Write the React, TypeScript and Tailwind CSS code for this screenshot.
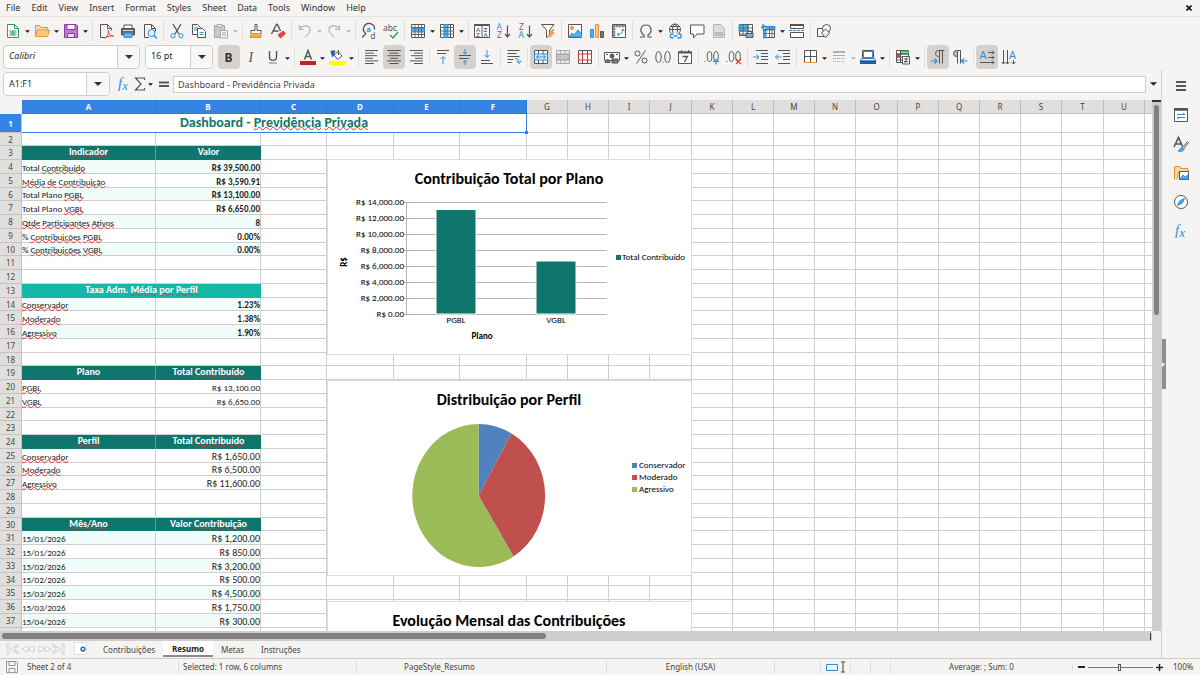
import type { ReactNode } from "react";

const GRAY = "#555555";
const BLUE = "#2f8fd6";
const ORANGE = "#e8913c";
const PURPLE = "#a33bb5";
const GREEN = "#2f9e54";

const lines = (widths: number[], align: "l" | "c" | "r") =>
    widths.map((w, i) => {
        const x = align === "l" ? 1 : align === "c" ? 8 - w / 2 : 15 - w;
        return `M${x} ${1.5 + i * 2.6}h${w}`;
    }).join("");

const letter = (x: number, y: number, text: string, fill: string, size = 7, bold = false) => (
    <text
        x={x}
        y={y}
        fill={fill}
        stroke="none"
        fontSize={size}
        fontWeight={bold ? 700 : 400}
        fontFamily="Noto Sans, sans-serif"
    >
        {text}
    </text>
);

const icons: Record<string, ReactNode> = {
    new: (
        <g stroke={GREEN}>
            <path d="M2.5 1.5h7l4 4v9h-11z" fill="#fff" />
            <path d="M9.5 1.5v4h4" />
            <path d="M4.5 8h7M4.5 10h7M4.5 12h7M8 8v4" strokeWidth="1.2" />
        </g>
    ),
    open: (
        <g stroke={ORANGE}>
            <path d="M1.5 13.5v-11h4l1.5 2h6.5v2.5" fill="#fbd9a5" />
            <path d="M1.5 13.5l2-6.5h12l-2 6.5z" fill="#fdc97c" />
        </g>
    ),
    save: (
        <g stroke="#8d3aa0">
            <path d="M1.5 1.5h11.5l1.5 1.5v11.5h-13z" fill="#c678d8" />
            <path d="M4 1.5h8v5h-8z" fill="#fff" />
            <path d="M4.5 14.5v-4h7v4z" fill="#efd8f4" />
        </g>
    ),
    pdf: (
        <g>
            <path d="M8 14.5H2.5v-13h7l4 4v2M9.5 1.5v4h4" />
            <path d="M7 15c3-2 4-5 3.5-7.5-.5 3 2 5.5 5 5.5-3-.5-6 .5-8.5 2z" stroke="#e0433f" />
        </g>
    ),
    print: (
        <g>
            <path d="M4 5V2h8v3" fill="#fff" />
            <path d="M1.5 5.5h13v6.5h-13z" fill="#666" />
            <path d="M3 7.5h10" stroke="#ddd" />
            <path d="M4 10h8v4.5H4z" fill="#6db4ec" stroke={BLUE} />
        </g>
    ),
    preview: (
        <g>
            <path d="M7 14.5H2.5v-13h7l4 4v3M9.5 1.5v4h4" />
            <circle cx="9.5" cy="10" r="3.5" stroke={BLUE} fill="#dceefb" />
            <path d="M12 12.5l3 3" stroke={BLUE} strokeWidth="1.5" />
        </g>
    ),
    cut: (
        <g>
            <path d="M4 1l6 10M12 1L6 11" strokeWidth="1.3" />
            <circle cx="4" cy="12.8" r="2.1" stroke={BLUE} />
            <circle cx="12" cy="12.8" r="2.1" stroke={BLUE} />
        </g>
    ),
    copy: (
        <g>
            <path d="M1.5 1.5h5l3 3v7h-8z" fill="#fff" />
            <path d="M3 5h4M3 7h4" stroke={BLUE} />
            <path d="M6.5 5.5h5l3 3v6h-8z" fill="#fff" />
            <path d="M8.5 9.5h4M8.5 11.5h4" stroke={BLUE} />
        </g>
    ),
    paste: (
        <g stroke="#a8a8a8">
            <path d="M1.5 2.5h10v12h-10z" fill="#c9c9c9" />
            <path d="M4 1.5h5v2.5H4z" fill="#eee" />
            <path d="M7.5 7.5h7v7.5h-7z" fill="#f6f6f6" />
            <path d="M9 10h4M9 12h4" />
        </g>
    ),
    brush: (
        <g>
            <path d="M7 1.5h2v6h4v3H3v-3h4z" fill="#fff" />
            <path d="M3 10.5h10v4H2z" fill="#f5a95c" stroke={ORANGE} />
        </g>
    ),
    clear: (
        <g>
            <path d="M1.5 11L6.5 1.5h1L10.5 8M3.5 8h5" strokeWidth="1.4" />
            <path d="M8 12l5-4 2.5 2.5-5 4.5z" fill="#e8484b" stroke="#e0433f" />
        </g>
    ),
    undo: <path d="M2.5 2v4.5h4.5M2.5 6.5C5 2 12 1.5 13 6c.7 3.5-2 5-5 8" stroke="#b5b5b5" strokeWidth="1.2" />,
    redo: <path d="M13.5 2v4.5H9M13.5 6.5C11 2 4 1.5 3 6c-.7 3.5 2 5 5 8" stroke="#b5b5b5" strokeWidth="1.2" />,
    find: (
        <g>
            <path d="M5 10.5A5.5 5.5 0 1 1 13.5 6.5M5 10.5l-4 4" strokeWidth="1.3" />
            {letter(5.5, 8.5, "a", BLUE, 7, true)}
            {letter(9.5, 15.5, "d", GRAY, 8)}
        </g>
    ),
    spell: (
        <g>
            {letter(0, 7.5, "abc", GRAY, 8.5)}
            <path d="M7 12l3 3 5-6" stroke={GREEN} strokeWidth="1.3" />
        </g>
    ),
    row: (
        <g>
            <path d="M1.5 1.5h13v13h-13z" fill="#fff" />
            <path d="M1.5 4.5h13M1.5 11.5h13" />
            <path d="M1.5 5h13v4h-13z" fill="#57aef0" stroke={BLUE} />
            <path d="M5 1.5v13M8.5 1.5v13M11.5 1.5v13" strokeWidth=".8" />
        </g>
    ),
    col: (
        <g>
            <path d="M1.5 1.5h13v13h-13z" fill="#fff" />
            <path d="M11.5 1.5v13" />
            <path d="M5 1.5v13h4v-13z" fill="#57aef0" stroke={BLUE} />
            <path d="M1.5 4.5h13M1.5 8h13M1.5 11h13" strokeWidth=".8" />
        </g>
    ),
    sort: (
        <g>
            <path d="M.5 1.5h15v13H.5zM8 1.5v13" fill="#fff" />
            <path d="M.5 2h15" strokeWidth="2" />
            {letter(2, 8.5, "A", BLUE, 6, true)}
            {letter(2.2, 14, "Z", PURPLE, 6, true)}
            {letter(9.7, 8.5, "Z", PURPLE, 6, true)}
            {letter(9.5, 14, "A", BLUE, 6, true)}
        </g>
    ),
    asc: (
        <g>
            {letter(0.5, 7, "A", BLUE, 8.5)}
            {letter(1, 15, "Z", PURPLE, 8.5)}
            <path d="M11.5 2.5v11M9 11l2.5 3 2.5-3" strokeWidth="1.2" />
        </g>
    ),
    desc: (
        <g>
            {letter(1, 7, "Z", PURPLE, 8.5)}
            {letter(0.5, 15, "A", BLUE, 8.5)}
            <path d="M11.5 2.5v11M9 11l2.5 3 2.5-3" strokeWidth="1.2" />
        </g>
    ),
    filter: (
        <g>
            <path d="M1.5 1.5h12.5L9.5 7v5l-3 2.5V7z" fill="#fff" />
            <path d="M12 6.5L8.5 11H11l-1.5 4L14.5 9.5H12L14 6.5z" fill="#f9a33c" stroke={ORANGE} strokeWidth=".6" />
        </g>
    ),
    image: (
        <g>
            <path d="M1.5 1.5h13v13h-13z" fill="#fff" />
            <circle cx="5" cy="5" r="1.5" fill="#f9a33c" stroke={ORANGE} />
            <path d="M2 14l3-4 2 2 4-5 3.5 4v3z" fill="#57aef0" stroke={BLUE} />
        </g>
    ),
    chart: (
        <g>
            <path d="M1.5 6.5h3v8h-3z" fill="#57aef0" stroke={BLUE} />
            <path d="M6.5 1.5h3v13h-3z" fill="#fdc97c" stroke={ORANGE} />
            <path d="M11.5 8.5h3v6h-3z" fill="#777" />
        </g>
    ),
    pivot: (
        <g>
            <path d="M1.5 1.5h13v13h-13z" fill="#fff" />
            <path d="M2 3h12M3 2v12M6 2v2.5M9 2v2.5M12 2v2.5M2 6h2.5M2 9h2.5M2 12h2.5" strokeWidth="1.4" stroke="#888" />
            <path d="M6 11.5c4 0 6-2 6-5M10.5 8L12 6l1.5 2M8 10l-2 1.5 2 1.5" stroke={BLUE} />
        </g>
    ),
    omega: <path d="M2 14h4v-2C1 9 2.5 2 8 2s7 7 2 10v2h4" strokeWidth="1.2" />,
    link: (
        <g>
            <circle cx="8" cy="6.5" r="5.5" />
            <path d="M8 1c-3.5 3-3.5 8 0 11M8 1c3.5 3 3.5 8 0 11M2.5 6.5h11M3.5 3.5h9" />
            <path d="M3 10h11v6H3z" fill="#f5f4f2" stroke="none" />
            <path d="M6.5 11H5.3a2 2 0 0 0 0 4h1.2M10.5 11h1.7a2 2 0 0 1 0 4h-1.7M6.5 13h4" stroke={BLUE} strokeWidth="1.3" />
        </g>
    ),
    comment: <path d="M1.5 2h13.5v9H8l-3.5 4v-4h-3z" fill="#fff" />,
    header: (
        <g stroke="#b5b5b5">
            <path d="M2.5 1.5h7l4 4v9h-11z" fill="#dedede" />
            <path d="M4 9.5h8v3H4z" fill="#c0c0c0" />
        </g>
    ),
    printRange: (
        <g>
            <path d="M1.5 1.5h13v11h-13z" fill="#fff" />
            <path d="M1 2h9v6H1z" fill="#57aef0" stroke={BLUE} />
            <path d="M1.5 5h13M1.5 8h13M1.5 11h13M5 1.5v11M10 1.5v11" strokeWidth=".8" />
            <path d="M8 10h7v4.5H8z" fill="#6db4ec" />
            <path d="M9.5 8.5h4v2h-4z" fill="#fff" />
        </g>
    ),
    freeze: (
        <g>
            <path d="M3.5 3.5h11v11h-11z" fill="#fff" />
            <path d="M3 3.5h12v3H3zM3.5 3v12H6V3z" fill="#57aef0" stroke={BLUE} />
            <path d="M3.5 7h11M3.5 10.5h11M9.5 3.5v11M12 3.5v11" strokeWidth=".8" />
            <path d="M1 4h4M3 1v5" stroke={BLUE} strokeWidth="1.3" />
        </g>
    ),
    split: (
        <g>
            <path d="M1.5 1.5v4h13v-4zM1.5 14.5v-5h13v5z" fill="#fff" />
            <path d="M1 2h14" strokeWidth="2" />
            <path d="M0 7.5h16" stroke={BLUE} strokeDasharray="3 1" />
        </g>
    ),
    shapes: (
        <g>
            <path d="M1.5 5.5h8v8h-8z" fill="#f5f4f2" />
            <circle cx="10.5" cy="5.5" r="4" fill="#f5f4f2" />
            <path d="M9.5 6l4 4-4 4.5-4-4.5z" fill="#f5f4f2" />
        </g>
    ),
    left: <path d={lines([13, 9, 12, 8, 13, 9], "l")} />,
    center: <path d={lines([14, 9, 13, 8, 14, 9], "c")} />,
    right: <path d={lines([13, 9, 12, 8, 13, 9], "r")} />,
    top: (
        <g>
            <path d="M2 1.5h12M2 4.5h9" />
            <path d="M8 15V8M5.5 10L8 7.5l2.5 2.5" stroke={BLUE} />
        </g>
    ),
    middle: (
        <g>
            <path d="M2 6.5h12M2 9.5h10" />
            <path d="M8 0v5M6 3l2 2 2-2M8 16v-4.5M6 13.5l2-2 2 2" stroke={BLUE} />
        </g>
    ),
    bottom: (
        <g>
            <path d="M2 11.5h9M2 14.5h12" />
            <path d="M8 1v7M5.5 6L8 8.5 10.5 6" stroke={BLUE} />
        </g>
    ),
    wrap: (
        <g>
            <path d="M1.5 1.5h12M1.5 4.5h9M1.5 7.5h12M1.5 10.5h6M1.5 13.5h4" />
            <path d="M9 9.5c3 0 4 1 4 4M10.5 11.5l2.5 3 2.5-3" stroke={BLUE} />
        </g>
    ),
    merge: (
        <g>
            <path d="M1.5 1.5h13v13h-13zM5.5 1.5v3.5M10 1.5v3.5M5.5 11v3.5M10 11v3.5" fill="#fff" />
            <path d="M1.5 5h13v6h-13z" fill="#d9effc" stroke={BLUE} />
            <path d="M3.5 8h9M5.5 6L3.5 8l2 2M10.5 6l2 2-2 2" stroke={BLUE} />
        </g>
    ),
    mergeCells: (
        <g stroke="#aaa">
            <path d="M1.5 1.5h13v13h-13z" fill="#ececec" />
            <path d="M1.5 5h13M1.5 11h13M5.5 1.5V5M10 1.5V5M5.5 11v3.5M10 11v3.5" />
            <path d="M2 5.5h12v5H2z" fill="#c4c4c4" />
        </g>
    ),
    splitCells: (
        <g>
            <path d="M1.5 1.5h13v13h-13z" fill="#fff" />
            <path d="M5.5 1.5v13M10.5 1.5v13" />
            <path d="M1.5 5h13v6h-13zM5.5 5v6M10.5 5v6" stroke="#d9363a" />
        </g>
    ),
    currency: (
        <g>
            <path d="M.5 3.5h15v8H.5z" fill="#fff" />
            <circle cx="8" cy="7" r="2" fill={GRAY} />
            <path d="M1 13.5c1-4 4-4 5 0zM8 10h6v4H8z" fill="#777" />
            <path d="M2 5.5h2M12 5.5h2" />
        </g>
    ),
    percent: (
        <g>
            <circle cx="4.5" cy="4.5" r="2.5" />
            <circle cx="11.5" cy="11.5" r="2.5" />
            <path d="M12.5 1.5l-9 13" />
        </g>
    ),
    number: (
        <g>
            <ellipse cx="3.5" cy="8" rx="2.7" ry="5.5" />
            <ellipse cx="12.5" cy="8" rx="2.7" ry="5.5" />
            <path d="M7.5 13.5h1" />
        </g>
    ),
    date: (
        <g>
            <path d="M1.5 3h13v11.5h-13z" fill="#fff" />
            <path d="M1 3.5h14" strokeWidth="2" />
            <path d="M4.5 1v2M11.5 1v2" />
            <path d="M5.5 7.5h5L7.5 13" strokeWidth="1.3" />
        </g>
    ),
    addDecimal: (
        <g>
            <ellipse cx="5.5" cy="7.5" rx="2.3" ry="5" />
            <ellipse cx="12" cy="7.5" rx="2.3" ry="5" />
            <path d="M.5 12.5h1" />
            <path d="M9 12.5h6M12 9.5v6" stroke={BLUE} strokeWidth="1.2" />
        </g>
    ),
    delDecimal: (
        <g>
            <ellipse cx="5.5" cy="7.5" rx="2.3" ry="5" />
            <ellipse cx="12" cy="7.5" rx="2.3" ry="5" />
            <path d="M.5 12.5h1" />
            <path d="M10 10l5 5M15 10l-5 5" stroke="#e0433f" strokeWidth="1.2" />
        </g>
    ),
    indent: (
        <g>
            <path d="M3 1.5h12M8 4.5h7M8 7.5h7M8 10.5h7M3 14.5h12" />
            <path d="M0 8h6M3.5 5.5L6 8l-2.5 2.5" stroke={BLUE} />
        </g>
    ),
    outdent: (
        <g>
            <path d="M3 1.5h12M8 4.5h7M8 7.5h7M8 10.5h7M3 14.5h12" />
            <path d="M.5 8h6M3 5.5L.5 8 3 10.5" stroke={BLUE} />
        </g>
    ),
    borders: (
        <g>
            <path d="M2.5 13.5v-12h12v12M8.5 1.5v12M2.5 7.5h12" fill="#fff" />
            <path d="M2 13.5h13" stroke={ORANGE} />
        </g>
    ),
    borderStyle: (
        <g stroke="#b0b0b0">
            <path d="M2 3h12" strokeWidth="2" />
            <path d="M2 6.5h12" />
            <path d="M2 9.5h12" strokeDasharray="3 1" />
            <path d="M2 12.5h12" strokeDasharray="1 1" />
        </g>
    ),
    borderColor: (
        <g>
            <path d="M2.5 1.5h11v8h-11z" fill="#fff" />
            <path d="M3.5 2.5h9v6h-9zM0 12l2-3h12l2 3z" stroke={BLUE} />
            <path d="M0 11.5h16V15H0z" fill="#1b5ea8" stroke="none" />
        </g>
    ),
    conditional: (
        <g>
            <path d="M1.5 1.5h12v12h-12z" fill="#fff" />
            <path d="M5.5 2h8v3h-8z" fill="#7ed69c" stroke={GREEN} />
            <path d="M2 5h3.5v3H2z" fill="#e8484b" stroke="#e0433f" />
            <path d="M1.5 5h12M1.5 8h12M1.5 11h12M5.5 1.5v12" />
            <path d="M7.5 7.5h7v7.5h-7z" fill="#fff" />
            <path d="M9 10h4M9 12.5h4M12 8.5l-2 5.5" />
        </g>
    ),
    ltr: (
        <g>
            <path d="M14.5 1.5H8.5a3 3 0 0 0 0 6h1M9.5 1.5v13M12.5 1.5v13" />
            <path d="M1 12h6M4.5 9.5L7 12l-2.5 2.5" stroke={BLUE} strokeWidth="1.2" />
        </g>
    ),
    rtl: (
        <g>
            <path d="M9 1.5H4.5a3 3 0 0 0 0 6h1v-6M5.5 1.5v13M8.5 1.5v13" fill="#bbb" />
            <path d="M9.5 12h6M12 9.5L9.5 12l2.5 2.5" stroke={BLUE} strokeWidth="1.2" />
        </g>
    ),
    textLtr: (
        <g>
            {letter(0.5, 10, "A", BLUE, 11)}
            <path d="M9 3.5h6M13 1.5l2 2-2 2M9 8.5h6M13 6.5l2 2-2 2M1 13.5h14M13 11.5l2 2-2 2" />
        </g>
    ),
    textTtb: (
        <g>
            {letter(8, 10, "A", BLUE, 11)}
            <path d="M2.5 1v14M.5 13l2 2 2-2M6.5 1v14M4.5 13l2 2 2-2M12.5 11v4M10.5 13l2 2 2-2" />
        </g>
    ),
    bold: letter(3.5, 12.5, "B", "#333", 12, true),
    italic: (
        <text x="5.5" y="12.5" fill={GRAY} stroke="none" fontSize="14" fontStyle="italic" fontFamily="Liberation Serif, serif">
            I
        </text>
    ),
    underline: (
        <g>
            <path d="M4.5 2v6c0 4.5 7 4.5 7 0V2" strokeWidth="1.4" />
            <path d="M4 14h8" stroke={BLUE} />
        </g>
    ),
    fontColor: (
        <g>
            <path d="M4.5 10.5L8 1.5l3.5 9M5.8 7.5h4.4" strokeWidth="1.5" />
            <path d="M0 12h16v4H0z" fill="#c9211e" stroke="none" />
        </g>
    ),
    fillColor: (
        <g>
            <path d="M5 6l4-3.5 4 4.5-4.5 3.5zM9.5 6V1" fill="#fff" />
            <path d="M2 2h4L3.5 8z" fill="#1b5ea8" stroke="#1b5ea8" />
            <path d="M0 12h16v4H0z" fill="#ffff00" stroke="none" />
        </g>
    ),
    sigma: <path d="M12.5 4V2h-9L9 8l-5.5 6h9v-2" strokeWidth="1.2" />,
    equals: <path d="M3 6.5h10M3 10h10" strokeWidth="1.8" />,
    fx: (
        <text x="2" y="12" fill={BLUE} stroke="none" fontSize="15" fontStyle="italic" fontFamily="Liberation Serif, serif">
            f<tspan fontSize="13" dy="2">x</tspan>
        </text>
    ),
    menu: <path d="M3 4h10M3 8h10M3 12h10" stroke="#222" strokeWidth="1.6" />,
    properties: (
        <g>
            <path d="M1.5 1.5h13v13h-13z" fill="#fff" />
            <path d="M1 2.5h14" strokeWidth="2.5" />
            <path d="M4 7.5h8M10 6l2 1.5M4 10.5h8M6 12l-2-1.5" stroke={BLUE} />
        </g>
    ),
    styles: (
        <g>
            <path d="M1 11L5.5 1.5l4 9M3 8h5" strokeWidth="1.6" />
            <path d="M14.5 5.5L9 12l1.5 1 5-6.5z" fill="#fff" />
            <path d="M9.5 11.5c-3 0-2 3-4.5 3.5 3 1 6 0 6-2z" fill="#57aef0" stroke={BLUE} />
        </g>
    ),
    gallery: (
        <g>
            <path d="M1.5 14.5v-13h5l1.5 2h7V7M4 14.5L5.5 6.5" fill="#fdd9a2" stroke={ORANGE} />
            <path d="M6.5 6.5h9v8h-9z" fill="#fff" />
            <path d="M7 14l3-4 2 2 3-2v4z" fill="#57aef0" stroke={BLUE} />
        </g>
    ),
    navigator: (
        <g>
            <circle cx="8" cy="8" r="6.5" fill="#fff" />
            <path d="M11.5 4.5L9.5 9 4.5 11.5 6.5 7z" fill="#57aef0" stroke={BLUE} />
            <circle cx="8" cy="8" r="1" fill="#fff" stroke={BLUE} />
        </g>
    ),
};

const labels: Record<string, string> = {
    row: "Row", col: "Column", asc: "Sort Ascending", desc: "Sort Descending", ltr: "Left-to-Right", rtl: "Right-to-Left",
};

function Icon({ name }: { name: string }) {
    return (
        <svg viewBox="0 0 16 16" className="size-4 overflow-visible" fill="none" stroke={GRAY} aria-hidden="true">
            {icons[name]}
        </svg>
    );
}

function Arrow({ dim = false }: { dim?: boolean }) {
    return (
        <svg viewBox="0 0 8 4" className="h-[3px] w-[5px]" fill={dim ? "#b5b5b5" : "#1a1a1a"} aria-hidden="true">
            <path d="M0 0h8L4 4z" />
        </svg>
    );
}

type Tool = { icon: string; menu?: boolean; on?: boolean; dim?: boolean };

// "|" is a separator
const standardTools: string[] =
    "new+ open+ save+ | pdf print preview | cut copy paste- | brush clear | undo- redo- | find spell | row+ col+ | sort asc desc filter | image chart pivot | omega+ link comment header | printRange freeze+ split | shapes".split(" ");
const formatTools: string[] =
    "bold* italic underline+ | fontColor+ fillColor+ | left center* right | top middle* bottom | wrap | merge* mergeCells splitCells | currency+ percent number date | addDecimal delDecimal | indent outdent | borders+ borderStyle- borderColor+ | conditional+ | ltr* rtl | textLtr* textTtb".split(" ");

function parseTool(spec: string): Tool {
    const flag = spec.slice(-1);
    return {
        icon: spec.replace(/[+*-]$/, ""),
        menu: flag === "+" || flag === "-",
        on: flag === "*",
        dim: flag === "-",
    };
}

function Tools({ specs }: { specs: string[] }) {
    return (
        <>
            {specs.map((spec, i) => {
                if (spec === "|") {
                    const wide = parseTool(specs[i - 1]).menu;
                    return (
                        <span key={i} className={`${wide ? "w-1.5" : "w-[5px]"} flex h-5 shrink-0 justify-center`}>
                            <span className="w-px bg-[#e2e0de]" />
                        </span>
                    );
                }
                const tool = parseTool(spec);
                const label = labels[tool.icon] ?? tool.icon;
                return (
                    <span key={i} className="flex shrink-0 items-center">
                        <button
                            type="button"
                            aria-label={label}
                            className={`${tool.on ? "bg-[#d5d1ce]" : ""} flex h-6 w-[22px] items-center justify-center rounded`}
                        >
                            <Icon name={tool.icon} />
                        </button>
                        {tool.menu && (
                            <button type="button" aria-label={`${label} options`} className="flex h-6 w-[7px] items-center justify-center pt-0.5">
                                <Arrow dim={tool.dim} />
                            </button>
                        )}
                    </span>
                );
            })}
        </>
    );
}

function DropDown({ label, value, width, italic }: { label: string; value: string; width: string; italic?: boolean }) {
    return (
        <div className={`${width} relative h-6 shrink-0`}>
            <select
                aria-label={label}
                defaultValue={value}
                className={`${italic ? "italic" : ""} block h-full w-full appearance-none rounded border border-[#d0cdca] bg-white px-[5px] pb-0.5 text-[9px] leading-3 text-[#2a2a2a]`}
            >
                <option>{value}</option>
            </select>
            <span className="pointer-events-none absolute inset-y-px right-px flex w-[22px] items-center justify-center rounded-r border-l border-[#d0cdca] bg-[#f8f7f6]">
                <svg viewBox="0 0 8 4" className="h-1 w-2" fill="#333"><path d="M0 0h8L4 4z" /></svg>
            </span>
        </div>
    );
}

// text between underscores gets the spell checker's wavy line
function Spelled({ text }: { text: string }) {
    return (
        <>
            {text.split("_").map((part, i) =>
                i % 2 ? (
                    <span key={i} className="underline decoration-[#e03030] decoration-wavy decoration-1 -underline-offset-1 [text-decoration-skip-ink:none]">
                        {part}
                    </span>
                ) : (
                    part
                ),
            )}
        </>
    );
}

type Row = { a?: string; b?: string; kind: "head" | "bold" | "small" | "plain"; tint?: boolean };

const rows: Record<number, Row> = {
    3: { a: "_Indicador_", b: "Valor", kind: "head" },
    4: { a: "Total _Contribuído_", b: "R$ 39,500.00", kind: "bold", tint: true },
    5: { a: "_Média_ _de_ _Contribuição_", b: "R$ 3,590.91", kind: "bold" },
    6: { a: "Total Plano _PGBL_", b: "R$ 13,100.00", kind: "bold", tint: true },
    7: { a: "Total Plano _VGBL_", b: "R$ 6,650.00", kind: "bold" },
    8: { a: "_Qtde_ _Participantes_ _Ativos_", b: "8", kind: "bold", tint: true },
    9: { a: "% _Contribuições_ _PGBL_", b: "0.00%", kind: "bold" },
    10: { a: "% _Contribuições_ _VGBL_", b: "0.00%", kind: "bold", tint: true },
    14: { a: "_Conservador_", b: "1.23%", kind: "bold", tint: true },
    15: { a: "_Moderado_", b: "1.38%", kind: "bold" },
    16: { a: "_Agressivo_", b: "1.90%", kind: "bold", tint: true },
    19: { a: "Plano", b: "Total _Contribuído_", kind: "head" },
    20: { a: "_PGBL_", b: "R$ 13,100.00", kind: "small" },
    21: { a: "_VGBL_", b: "R$ 6,650.00", kind: "small" },
    24: { a: "_Perfil_", b: "Total _Contribuído_", kind: "head" },
    25: { a: "_Conservador_", b: "R$ 1,650.00", kind: "plain" },
    26: { a: "_Moderado_", b: "R$ 6,500.00", kind: "plain" },
    27: { a: "_Agressivo_", b: "R$ 11,600.00", kind: "plain" },
    30: { a: "_Mês/Ano_", b: "Valor _Contribuição_", kind: "head" },
    31: { a: "15/01/2026", b: "R$ 1,200.00", kind: "plain", tint: true },
    32: { a: "15/01/2026", b: "R$ 850.00", kind: "plain" },
    33: { a: "15/02/2026", b: "R$ 3,200.00", kind: "plain", tint: true },
    34: { a: "15/02/2026", b: "R$ 500.00", kind: "plain" },
    35: { a: "15/03/2026", b: "R$ 4,500.00", kind: "plain", tint: true },
    36: { a: "15/03/2026", b: "R$ 1,750.00", kind: "plain" },
    37: { a: "15/04/2026", b: "R$ 300.00", kind: "plain", tint: true },
};

const columns = "ABCDEFGHIJKLMNOPQRSTU".split("");
const columnWidths = [134, 105, 66, 67, 66, 67, 41, 41, 41, 42, 41, 41, 41, 41, 42, 41, 41, 41, 41, 42, 41];

const line = "border-r border-b border-[#cfcfcf]";

function GridRow({ n }: { n: number }) {
    const height = n === 1 ? "h-[19px]" : n % 4 === 2 ? "h-[13px]" : "h-[14px]";
    const row = rows[n];
    let first = 0;
    let lead: ReactNode = null;

    if (n === 1) {
        first = 6;
        lead = (
            <td colSpan={6} className="relative border-r border-b border-[#3584e4] text-center align-top text-[14px] leading-[17px] font-bold text-[#0f766e]">
                Dashboard - <Spelled text="_Previdência_ _Privada_" />
                <span className="absolute -right-0.5 -bottom-0.5 size-[3px] bg-[#3584e4]" />
            </td>
        );
    } else if (n === 13) {
        first = 2;
        lead = (
            <td colSpan={2} className="bg-[#14b8a6] text-center align-top text-[10px] leading-[11px] font-bold text-white">
                <Spelled text="Taxa Adm. _Média_ _por_ _Perfil_" />
            </td>
        );
    } else if (row?.kind === "head") {
        first = 2;
        const head = "bg-[#0f766e] text-center align-top text-[10px] leading-[11px] font-bold text-white";
        lead = (
            <>
                <td className={`${head} border-r border-[#5ba29c]`}><Spelled text={row.a ?? ""} /></td>
                <td className={head}><Spelled text={row.b ?? ""} /></td>
            </>
        );
    } else if (row) {
        first = 2;
        const tint = row.tint ? "bg-[#f0fdfa]" : "";
        const value = row.kind === "bold" ? "text-[9px] font-bold" : row.kind === "small" ? "text-[9px]" : "text-[10px]";
        lead = (
            <>
                <td className={`${line} ${tint} align-bottom text-[9px] leading-[11px]`}><Spelled text={row.a ?? ""} /></td>
                <td className={`${line} ${tint} ${value} text-right align-bottom leading-[11px]`}>{row.b}</td>
            </>
        );
    }

    return (
        <tr className={height}>
            <th
                scope="row"
                className={`${n === 1 ? "bg-[#3584e4] font-bold text-white" : "bg-[#e1dfdd] font-normal text-[#444]"} border-r border-b border-[#c6c4c2] font-['Noto_Sans',sans-serif] text-[8px] leading-[11px]`}
            >
                {n}
            </th>
            {lead}
            {columns.slice(first).map((c) => (
                <td key={c} className={line} />
            ))}
            <td className="border-b border-[#cfcfcf]" />
        </tr>
    );
}

function Sheet() {
    return (
        <table className="w-full table-fixed border-separate border-spacing-0 bg-white font-['Carlito','Lato',sans-serif] whitespace-nowrap text-[#1c1c1c]">
            <colgroup>
                <col className="w-[22px]" />
                {columnWidths.map((w, i) => (
                    <col key={i} style={{ width: w }} />
                ))}
                <col />
            </colgroup>
            <thead>
                <tr className="h-[14px] font-['Noto_Sans',sans-serif] text-[8px] leading-3">
                    <td className="bg-[#f5f4f2]" />
                    {columns.map((c, i) => (
                        <th
                            key={c}
                            scope="col"
                            className={`${i < 6 ? "border-[#2f76cf] bg-[#3584e4] font-bold text-white" : "border-[#c0bebc] bg-[#e1dfdd] font-normal text-[#444]"} border-r border-b`}
                        >
                            {c}
                        </th>
                    ))}
                    <td className="border-b border-[#c0bebc] bg-[#e1dfdd]" />
                </tr>
            </thead>
            <tbody>
                {Array.from({ length: 38 }, (_, i) => (
                    <GridRow key={i} n={i + 1} />
                ))}
            </tbody>
        </table>
    );
}

function ChartFrame({ top, title, children }: { top: string; title: string; children?: ReactNode }) {
    return (
        <svg
            viewBox="0 0 363 194"
            className={`${top} absolute left-[327px] h-[196px] w-[365px] border border-[#dcdcdc] bg-white font-['Carlito','Lato',sans-serif] text-[9px]`}
            role="img"
            aria-label={title}
        >
            <text x="181" y="24" textAnchor="middle" fontSize="16" fontWeight="700">{title}</text>
            {children}
        </svg>
    );
}

function BarChart() {
    return (
        <ChartFrame top="top-[59px]" title="Contribuição Total por Plano">
            {[14, 12, 10, 8, 6, 4, 2, 0].map((v, i) => (
                <g key={v}>
                    <path d={`M76 ${42.5 + i * 16}H279`} stroke="#b3b3b3" />
                    <text x="76" y={45 + i * 16} textAnchor="end">
                        {v ? `R$ ${v},000.00` : "R$ 0.00"}
                    </text>
                </g>
            ))}
            <path d="M78.5 42v112" stroke="#b3b3b3" />
            <path d="M108 49.5h40v104.5h-40zM208 101h40v53h-40z" fill="#0f766e" stroke="#fff" />
            <text x="128" y="163" textAnchor="middle">PGBL</text>
            <text x="228" y="163" textAnchor="middle">VGBL</text>
            <text x="154" y="179" textAnchor="middle" fontWeight="700">Plano</text>
            <text transform="translate(19 102) rotate(-90)" textAnchor="middle" fontWeight="700">R$</text>
            <path d="M288 95h5v5h-5z" fill="#0f766e" />
            <text x="294" y="100">Total Contribuído</text>
        </ChartFrame>
    );
}

const slices = [
    { name: "Conservador", color: "#4f81bd", path: "M150.5 114.5V43A66.5 71.5 0 0 1 183.5 52.5z" },
    { name: "Moderado", color: "#c0504d", path: "M150.5 114.5L183.5 52.5A66.5 71.5 0 0 1 185.5 175.5z" },
    { name: "Agressivo", color: "#9bbb59", path: "M150.5 114.5L185.5 175.5A66.5 71.5 0 1 1 150.5 43z" },
];

function PieChart() {
    return (
        <ChartFrame top="top-[280px]" title="Distribuição por Perfil">
            {slices.map((s, i) => (
                <g key={s.name}>
                    <path d={s.path} fill={s.color} />
                    <path d={`M304 ${82 + i * 12}h5v5h-5z`} fill={s.color} />
                    <text x="311" y={87 + i * 12}>{s.name}</text>
                </g>
            ))}
        </ChartFrame>
    );
}

function FormulaBar() {
    return (
        <div className="flex h-7 items-center pl-[3px]">
            <div className="flex h-6 w-[107px] shrink-0 overflow-hidden rounded border border-[#d0cdca] bg-white">
                <input aria-label="Name Box" defaultValue="A1:F1" className="min-w-0 flex-1 pl-[5px] text-[9px] text-[#2a2a2a]" />
                <button type="button" aria-label="Name Box list" className="flex w-[23px] items-center justify-center border-l border-[#d0cdca] bg-[#f8f7f6]">
                    <svg viewBox="0 0 8 4" className="h-1 w-2" fill="#333"><path d="M0 0h8L4 4z" /></svg>
                </button>
            </div>
            <div className="flex w-[63px] shrink-0 items-center pl-1.5">
                <button type="button" aria-label="Function Wizard"><Icon name="fx" /></button>
                <button type="button" aria-label="Select Function"><Icon name="sigma" /></button>
                <button type="button" aria-label="Function list" className="pr-[3px]"><Arrow /></button>
                <button type="button" aria-label="Formula"><Icon name="equals" /></button>
            </div>
            <input
                aria-label="Input line"
                defaultValue="Dashboard - Previdência Privada"
                className="h-[17px] min-w-0 flex-1 border border-[#d0cdca] bg-white px-1 text-[9px] text-[#444]"
            />
            <button type="button" aria-label="Expand Formula Bar" className="flex h-6 w-[15px] shrink-0 items-center justify-center">
                <svg viewBox="0 0 8 4" className="h-1 w-[7px]" fill="#222"><path d="M0 0h8L4 4z" /></svg>
            </button>
        </div>
    );
}

function SheetTabs() {
    return (
        <div className="flex h-[17px] shrink-0 items-start pl-1.5 text-[8px] text-[#444]">
            <svg viewBox="0 0 60 12" className="mt-0.5 h-3 w-[60px]" fill="#fff" stroke="#d2d0ce" aria-hidden="true">
                <path d="M1 1h2v10H1zM12 1L5 6l7 5V8H9V4h3zM22 3l-6 3 6 3zM28 3l-6 3 6 3zM33 3l6 3-6 3zM39 3l6 3-6 3zM47 1l7 5-7 5V8h3V4h-3zM56 1h2v10h-2z" />
            </svg>
            <button type="button" aria-label="Add sheet" className="mx-2 mt-px flex h-[13px] w-[13px] items-center justify-end border border-[#e3e1df] bg-white">
                <svg viewBox="0 0 8 8" className="size-1.5" fill="none" stroke="#2f66b0" strokeWidth="2"><circle cx="4" cy="4" r="2.5" /></svg>
            </button>
            <div role="tablist" className="flex h-4 items-stretch leading-[15px]">
                <button type="button" role="tab" className="px-2">Contribuições</button>
                <button type="button" role="tab" aria-selected="true" className="w-[50px] border-b-2 border-[#8a8a8a] bg-white text-center font-bold text-[#222]">Resumo</button>
                <button type="button" role="tab" className="px-2">Metas</button>
                <button type="button" role="tab" className="px-[9px]">Instruções</button>
            </div>
        </div>
    );
}

function StatusBar() {
    return (
        <footer className="flex h-[17px] shrink-0 items-center border-t border-[#cfccc9] pl-1.5 text-[8px] whitespace-nowrap text-[#444]">
            <svg viewBox="0 0 12 12" className="size-3 shrink-0" fill="none" stroke="#999" aria-hidden="true">
                <path d="M.5.5h10l1 1v10H.5zM3 .5h6v4H3zM3 11.5v-4h6v4" />
            </svg>
            <span className="w-[160px] shrink-0 pl-[9px]">Sheet 2 of 4</span>
            <span className="w-[178px] shrink-0 border-l border-[#e0dedc] pl-1">Selected: 1 row, 6 columns</span>
            <span className="w-[250px] shrink-0 border-l border-[#e0dedc] text-center">
                <span className="block w-[165px]">PageStyle_Resumo</span>
            </span>
            <span className="min-w-[160px] flex-1 border-x border-[#e0dedc] text-center">English (USA)</span>
            <span className="h-3 w-[45px] shrink-0" />
            <span className="flex h-3 w-[31px] shrink-0 items-center gap-[3px] border-x border-[#e0dedc] pl-[5px]">
                <svg viewBox="0 0 20 12" className="h-3 w-5 shrink-0" fill="none" aria-hidden="true">
                    <path d="M.5 3.5h11v6H.5z" stroke={BLUE} fill="#eaf5fc" />
                    <path d="M15 1h4M17 1v10M15 11h4" stroke="#444" />
                </svg>
            </span>
            <span className="h-3 w-5 shrink-0 border-r border-[#e0dedc]" />
            <span className="h-3 w-5 shrink-0 border-r border-[#e0dedc]" />
            <span className="w-[181px] shrink-0 text-center">Average: ; Sum: 0</span>
            <span className="flex w-[101px] shrink-0 items-center gap-[3px] border-l border-[#e0dedc] pl-[5px] text-[#222]">
                <button type="button" aria-label="Zoom Out" className="h-0.5 w-[7px] bg-[#222]" />
                <input
                    type="range"
                    aria-label="Zoom"
                    defaultValue={49}
                    className="h-2 w-[65px] appearance-none bg-transparent [&::-webkit-slider-runnable-track]:h-px [&::-webkit-slider-runnable-track]:bg-[#777] [&::-webkit-slider-thumb]:-mt-[3px] [&::-webkit-slider-thumb]:h-[7px] [&::-webkit-slider-thumb]:w-[3px] [&::-webkit-slider-thumb]:appearance-none [&::-webkit-slider-thumb]:border [&::-webkit-slider-thumb]:border-[#555] [&::-webkit-slider-thumb]:bg-[#f5f4f2]"
                />
                <button type="button" aria-label="Zoom In">
                    <svg viewBox="0 0 7 7" className="size-[7px]" stroke="#222" strokeWidth="1.5"><path d="M0 3.5h7M3.5 0v7" /></svg>
                </button>
            </span>
            <span className="w-[27px] shrink-0">100%</span>
        </footer>
    );
}

export default function App() {
    return (
        <div className="flex h-screen flex-col overflow-hidden bg-[#f5f4f2] font-['Noto_Sans',sans-serif] text-[#333]">
            <nav className="flex h-[17px] shrink-0 items-center gap-[11px] border-b border-[#e6e4e2] px-[6px] text-[9px]">
                {["File", "Edit", "View", "Insert", "Format", "Styles", "Sheet", "Data", "Tools", "Window", "Help"].map((item) => (
                    <button key={item} type="button">{item}</button>
                ))}
                <button type="button" aria-label="Close" className="ml-auto pr-0.5">
                    <svg viewBox="0 0 6 6" className="size-1.5" stroke="#111" strokeWidth="1.6"><path d="M.5 .5l5 5M5.5 .5l-5 5" /></svg>
                </button>
            </nav>
            <div className="flex h-[27px] shrink-0 items-center pl-0.5">
                <Tools specs={standardTools} />
            </div>
            <div className="flex h-[26px] shrink-0 items-center pl-[3px]">
                <DropDown label="Font Name" value="Calibri" width="w-[137px] mr-[5px]" italic />
                <DropDown label="Font Size" value="16 pt" width="w-[68px] mr-[5px]" />
                <Tools specs={formatTools} />
            </div>
            <div className="flex min-h-0 flex-1">
                <main className="flex min-w-0 flex-1 flex-col border-r border-[#d0cdca]">
                    <div className="mb-0.5 shrink-0">
                        <FormulaBar />
                    </div>
                    <div className="flex min-h-0 flex-1">
                        <div className="relative min-w-0 flex-1 overflow-hidden">
                            <Sheet />
                            <BarChart />
                            <PieChart />
                            <ChartFrame top="top-[501px]" title="Evolução Mensal das Contribuições" />
                        </div>
                        <div className="flex w-[9px] shrink-0 flex-col items-center border-t-2 border-[#333] bg-[#cecece] pt-[3px]">
                            <div className="h-2/5 w-[5px] rounded-full bg-[#808080]" />
                        </div>
                    </div>
                    <div className="mr-[9px] flex h-[10px] shrink-0 items-center justify-between bg-[#cecece] pl-0.5">
                        <div className="h-[6px] w-[544px] rounded-full bg-[#808080]" />
                        <div className="mr-px h-[7px] w-px bg-[#333]" />
                    </div>
                    <SheetTabs />
                </main>
                <aside className="relative flex w-[38px] shrink-0 flex-col items-center gap-[13px] pt-2">
                    {["menu", "properties", "styles", "gallery", "navigator", "fx"].map((name) => (
                        <button key={name} type="button" aria-label={name}>
                            <Icon name={name} />
                        </button>
                    ))}
                    <button
                        type="button"
                        aria-label="Hide sidebar"
                        className="absolute top-[269px] left-0 flex h-[50px] w-1 items-center bg-[#8f8f8f]"
                    >
                        <svg viewBox="0 0 4 6" className="h-[5px] w-[3px]" fill="#fff"><path d="M0 0l4 3-4 3z" /></svg>
                    </button>
                </aside>
            </div>
            <StatusBar />
        </div>
    );
}
